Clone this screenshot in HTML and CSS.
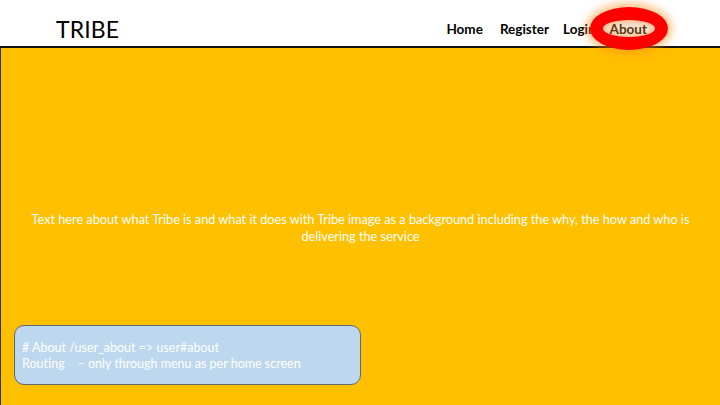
FILE: index.html
```html
<!DOCTYPE html>
<html>
<head>
<meta charset="utf-8">
<link rel="stylesheet" href="styles.css">
</head>
<body>
<header class="topbar">
  <div class="brand">TRIBE</div>
  <nav class="menu">
    <a class="menu-item home">Home</a>
    <a class="menu-item">Register</a>
    <a class="menu-item">Login</a>
    <a class="menu-item active">About</a>
  </nav>
</header>
<main class="hero">
  <div class="hero-body">
    <p class="hero-text">Text here about what Tribe is and what it does with Tribe image as a background including the why, the how and who is delivering the service</p>
  </div>
  <div class="note">
    <div class="note-line"># About /user_about =&gt; user#about</div>
    <div class="note-line">Routing    – only through menu as per home screen</div>
  </div>
</main>
</body>
</html>
```
FILE: styles.css
```css
html, body {
  margin: 0;
  padding: 0;
  height: 100%;
}
body {
  font-family: Lato, "Open Sans", sans-serif;
  background: #fff;
  display: flex;
  flex-direction: column;
  overflow: hidden;
}
.topbar {
  flex: 0 0 48px;
  height: 48px;
  display: flex;
  align-items: center;
  justify-content: space-between;
  padding: 12px 73px 0 56px;
  box-sizing: border-box;
  border-bottom: 2px solid #111;
}
.brand {
  font-size: 23px;
  color: #000;
  letter-spacing: 0.1px;
}
.menu {
  display: flex;
  gap: 14px;
  align-items: center;
}
.menu-item {
  display: block;
  font-size: 13.5px;
  line-height: 16px;
  font-weight: bold;
  color: #000;
  position: relative;
}
.menu-item.home {
  margin-right: 3px;
}
.menu-item.active {
  color: #5a3812;
  z-index: 1;
}
.menu-item.active::before {
  content: "";
  position: absolute;
  left: -20px;
  top: -14px;
  width: 78px;
  height: 43px;
  box-sizing: border-box;
  border: 13px solid #ff0000;
  border-radius: 50%;
  background: #f7e2cf;
  box-shadow: 0 0 9px 4px rgba(255, 140, 30, 0.55), inset 0 0 5px 2px rgba(255, 150, 70, 0.5);
  z-index: -1;
}
.hero {
  flex: 1;
  background: #ffc000;
  border-left: 1px solid #333;
  display: flex;
  flex-direction: column;
  padding: 0 0 20px 0;
}
.hero-body {
  flex: 1;
  display: flex;
  align-items: center;
  justify-content: center;
  padding: 82px 14px 0 14px;
}
.hero-text {
  margin: 0;
  color: #fff;
  font-size: 12.7px;
  line-height: 17px;
  text-align: center;
}
.note {
  margin-left: 13px;
  width: 332px;
  height: 44px;
  background: #bdd7ee;
  border: 1px solid #5b6b73;
  border-radius: 10px;
  padding: 14px 6px 0 7px;
  color: #fff;
  font-size: 12.5px;
  line-height: 16px;
}
.note-line {
  white-space: pre;
}
```
